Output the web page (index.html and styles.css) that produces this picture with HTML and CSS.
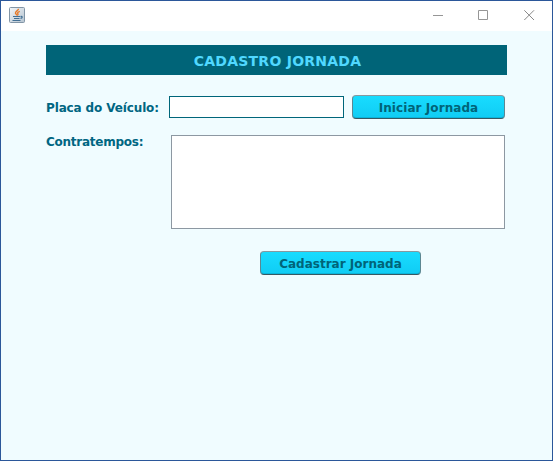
FILE: index.html
```
<!DOCTYPE html>
<html lang="pt-BR">
<head>
<meta charset="utf-8">
<title>Cadastro Jornada</title>
<link rel="stylesheet" href="styles.css">
</head>
<body>
<div class="window">
  <header class="titlebar">
    <svg class="java" width="16" height="16" viewBox="0 0 16 16">
      <defs><linearGradient id="g" x1="0" y1="0" x2="1" y2="1"><stop offset="0" stop-color="#f4f6f8"/><stop offset="1" stop-color="#b4c3d0"/></linearGradient></defs>
      <rect x=".5" y=".5" width="15" height="15" rx="1" fill="url(#g)" stroke="#8295a6"/>
      <path d="M9.500 1.800C9.500 3.700 6.300 4.200 6.500 6C6.700 7 7.700 7.400 7.800 8.500M10.800 4.300C8.900 5 8.200 5.800 8.900 6.800C9.300 7.600 8.700 8.200 8.300 8.500" fill="none" stroke="#e87928" stroke-width="1.400"/>
      <path d="M4 9.500H11M5 11.500H10.500M3.500 13.500H11.500M11.500 9.500C14 9 13.500 11 11.500 11.300" fill="none" stroke="#426f94" stroke-width="1.200"/>
    </svg>
    <svg class="controls" width="102" height="12" viewBox="0 0 102 12" fill="none" stroke="#969696">
      <path d="M0 6.500H10M45.500 1.500h9v9h-9z"/>
      <path d="M91.300 1.300L101 11M101 1.300L91.300 11" stroke="#888"/>
    </svg>
  </header>
  <main class="content">
    <h1 class="heading">CADASTRO JORNADA</h1>
    <div class="row plate-row">
      <label class="label plate-label" for="placa">Placa do Veículo:</label>
      <input class="plate" id="placa" type="text">
      <button class="button start" type="button">Iniciar Jornada</button>
    </div>
    <div class="row notes-row">
      <label class="label notes-label" for="notas">Contratempos:</label>
      <textarea class="notes" id="notas"></textarea>
    </div>
    <button class="button save" type="button">Cadastrar Jornada</button>
  </main>
</div>
</body>
</html>
```
FILE: styles.css
```
* { box-sizing: border-box; }
body { margin: 0; font-family: Tahoma, "DejaVu Sans", sans-serif; }
.window { width: 553px; height: 461px; border: 1px solid #2b579a; background: #f0fcff; }
.titlebar { height: 30px; background: #fff; display: flex; justify-content: space-between; padding: 6px 17px 0 8px; }
.controls { margin-top: 2px; }
.content { padding: 14px 45px 0; display: flex; flex-direction: column; align-items: flex-start; }
.heading { width: 461px; height: 30px; margin: 0; padding-left: 2px; background: #006478; color: #50d8ff; font-size: 14px; line-height: 32px; font-weight: 700; text-align: center; letter-spacing: .25px; }
.row { display: flex; align-items: flex-start; width: 100%; }
.label { color: #006682; font-size: 12px; line-height: 18px; font-weight: 700; letter-spacing: -.13px; white-space: nowrap; }
.plate-row { margin-top: 20px; height: 24px; }
.plate-label { width: 123px; margin-top: 4px; }
.plate { width: 175px; height: 22px; margin: 1px 8px 0 0; padding: 0 4px; border: 1px solid #00667a; border-radius: 0; background: #fff; }
.button { height: 24px; padding: 2px 0 0; border: 1px solid #87999f; border-bottom-color: #365963; border-left-color: #5c8792; border-right-color: #5c8792; border-radius: 4px; background: linear-gradient(#18dcff, #10ccf4); box-shadow: inset 0 -1px #0bb5db; color: #006478; font: 700 12px/20px Tahoma, "DejaVu Sans", sans-serif; letter-spacing: 0; white-space: nowrap; }
.start { width: 153px; letter-spacing: .07px; }
.notes-row { margin-top: 16px; }
.notes-label { width: 125px; margin-top: -2px; letter-spacing: -.25px; }
.notes { width: 334px; height: 94px; margin: 0; padding: 4px; border: 1px solid #8d98a2; border-radius: 0; background: #fff; resize: none; }
.save { width: 161px; margin: 22px 0 0 214px; }
```
